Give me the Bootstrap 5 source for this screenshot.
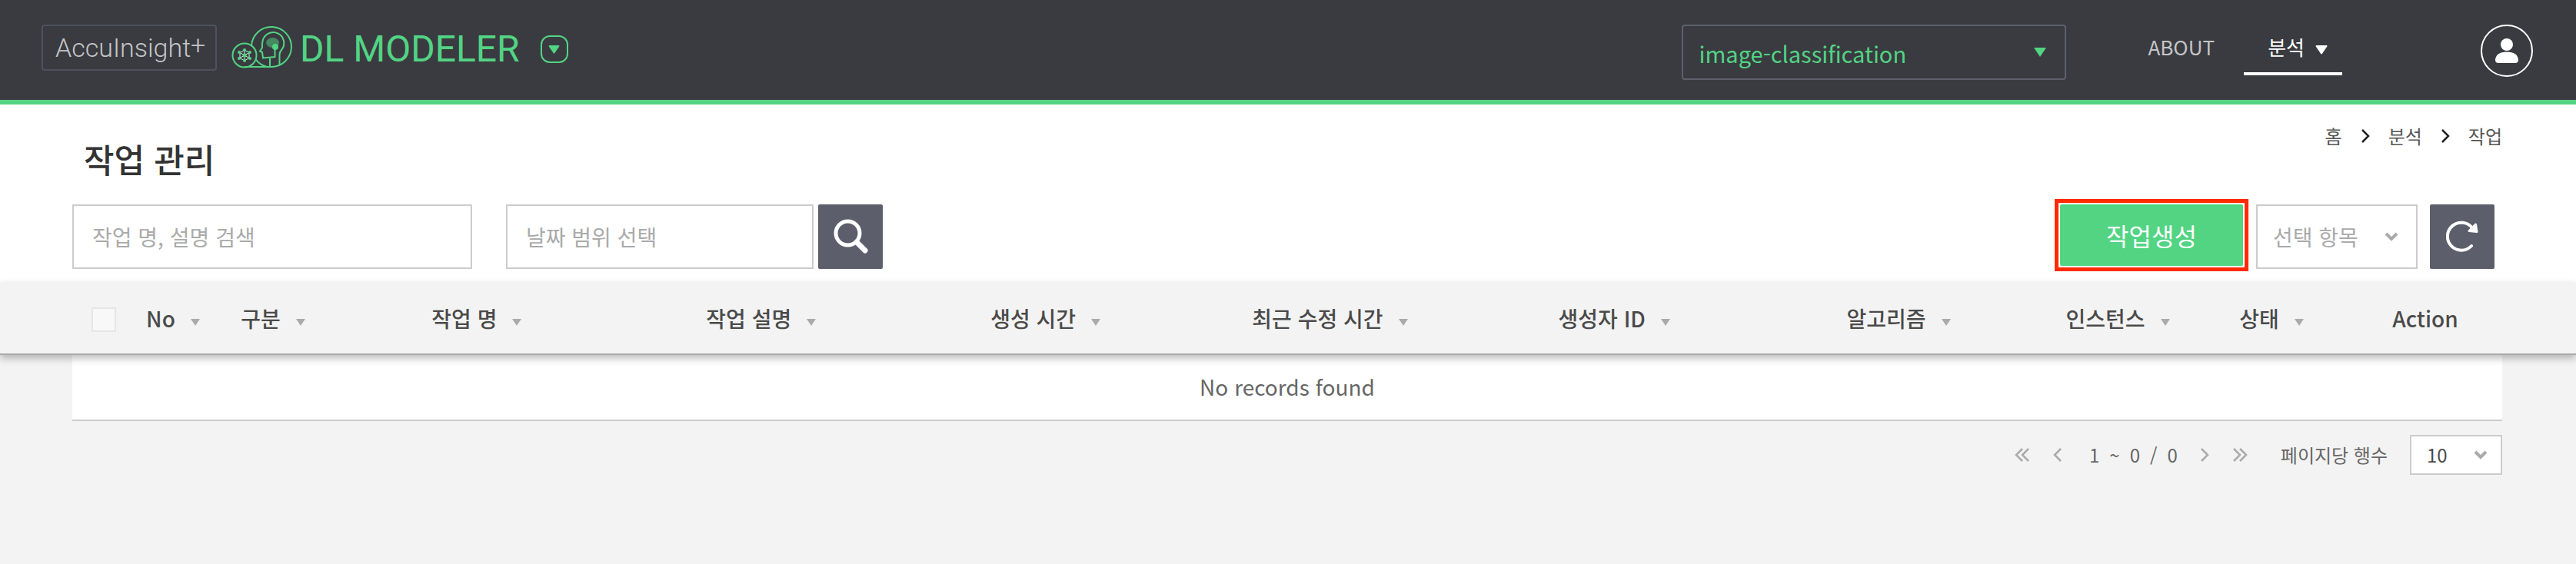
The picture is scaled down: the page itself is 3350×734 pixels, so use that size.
<!DOCTYPE html>
<html lang="ko">
<head>
<meta charset="utf-8">
<meta name="viewport" content="width=device-width, initial-scale=1">
<title>DL MODELER - 작업 관리</title>
<link href="https://cdn.jsdelivr.net/npm/bootstrap@5.3.0/dist/css/bootstrap.min.css" rel="stylesheet">
<style>
:root{--green:#52d483;--dark:#3a3b41;--slate:#5c5f6b;--line:#ccc;--page:#f3f3f3}
body{font-family:"Noto Sans CJK KR",sans-serif;background:var(--page);font-size:28px;color:#4a4a4a}
svg{display:block;flex:none}
.flip{rotate:180deg}

/* top bar */
.topbar{background:var(--dark);border-bottom:6px solid var(--green);height:136px;padding:0 56px 0 54px;align-items:flex-start}
.brand-box{width:228px;height:60px;margin-top:32px;padding-left:16px;border:2px solid #4e525c;border-radius:4px;color:#c4c5c7;font:300 34px/56px Roboto,sans-serif;white-space:nowrap}
.brand-box sup{font-size:34px;line-height:0;top:-4px}
.product-logo{margin:32px 8px 0 16px}
.product{font:400 48px/60px Roboto,sans-serif;color:var(--green);margin-top:34px}
.app-switch{width:36px;height:36px;margin:46px 0 0 27px;border:2px solid var(--green);border-radius:12px;background:none;color:var(--green)}
.project-select{width:500px;height:72px;margin-top:32px;padding:4px 20px 0;border:2px solid #5c5f6b;border-radius:4px;font-size:29px;color:var(--green);background-color:transparent;
 background-image:url("data:image/svg+xml,%3Csvg xmlns='http://www.w3.org/2000/svg' viewBox='0 0 16 12'%3E%3Cpath d='M0 0h16l-8 12z' fill='%2352d483'/%3E%3C/svg%3E");background-size:16px 12px;background-position:right 24px center}
.top-link{font-size:26px;line-height:38px;color:#c4c5c7;text-decoration:none;margin:42px 38px 0 106px}
.top-link.current{width:128px;height:56px;margin:42px 180px 0 0;padding-right:19px;color:#fff;border-bottom:4px solid #fff}
.top-link svg{margin:17px 0 0 14px}
.avatar{width:68px;height:68px;margin-top:32px;border:2px solid #fff;border-radius:50%;background:none}

/* title and tools */
.head-panel{background:#fff;padding:30px 96px 18px 94px}
.crumbs{padding:24px 96px 0 0;font-size:24px;line-height:34px;color:#555;gap:24px}
.crumbs a{color:inherit;text-decoration:none}
.crumbs svg{color:#222}
.page-title{font-size:43px;line-height:60px;font-weight:500;color:#333;margin:10px 0 0 15px}
.tools{margin-top:30px}
.field{height:84px;border:2px solid var(--line);border-radius:0;font-size:28px;padding:0 24px;color:#aaa}
.field::placeholder{color:#aaa}
.field-name{width:520px;margin-right:44px}
.field-date{width:400px;margin-right:6px}
.square{width:84px;height:84px;border-radius:2px;background:var(--slate);border:0;padding:0}
.refresh{margin:0 10px 0 16px}
.callout{border:5px solid #ff2a00;padding:2px;margin:-7px 10px -3px 0}
.create{width:238px;height:80px;border:0;border-radius:2px;background:var(--green);color:#fff;font-size:32px;padding:0}
.chevron{background-image:url("data:image/svg+xml,%3Csvg xmlns='http://www.w3.org/2000/svg' viewBox='0 0 18 12'%3E%3Cpath d='M2 2l7 7 7-7' fill='none' stroke='%23aaa' stroke-width='4'/%3E%3C/svg%3E");background-size:18px 12px}
.pick{width:210px;padding:0 20px;background-position:right 23px center}

/* job table */
.jobs{table-layout:fixed;width:100%;border-collapse:separate;border-spacing:0}
.jobs .c-edge-l{width:94px}
.jobs .c-check{width:81px}
.jobs .c-no{width:100px}
.jobs .c-kind{width:160px}
.jobs .c-short{width:200px}
.jobs .c-edge-r{width:96px}
.jobs thead{position:relative;box-shadow:0 4px 10px 0 rgba(0,0,0,.28)}
.jobs th{height:94px;padding:0;border-bottom:2px solid #aaa;background:var(--page);font-weight:500;text-align:center;vertical-align:middle}
.jobs th button{border:0;background:none;padding:0;font-weight:500;color:#4a4a4a;line-height:42px;white-space:nowrap}
.sort::after{content:"";display:inline-block;margin-left:20px;border:6px solid transparent;border-top:9px solid #aaa;border-bottom:0;vertical-align:2px}
.jobs .empty{height:86px;padding:0 0 2px;background:#fff;border-bottom:2px solid var(--line);text-align:center;color:#666;vertical-align:middle}
.jobs .form-check-input{display:block;width:32px;height:32px;margin:3px auto 0;border:2px solid #e6e6e6;border-radius:0;background-color:#f8f8f8}

/* pager */
.pager{padding:18px 96px 18px 0;font-size:24px;line-height:36px;color:#666}
.pager button{border:0;background:none;padding:0;color:#aaa}
.range{gap:13px;margin:0 29px 0 35px}
.gap-wide{gap:30px}
.pager label{margin:0 29px 0 43px}
.rows{width:120px;height:52px;border:2px solid var(--line);border-radius:0;padding:0 20px;font-size:24px;color:#4a4a4a;background-color:#fff;background-position:right 17px center}
</style>
</head>
<body>
<svg width="0" height="0" class="position-absolute" aria-hidden="true">
 <symbol id="down" viewBox="0 0 16 12"><path d="M1.500 1h13L8 10.500z" fill="currentColor" stroke="currentColor" stroke-width="2" stroke-linejoin="round"/></symbol>
 <symbol id="next" viewBox="0 0 12 18"><path d="M2 1l8 8-8 8" fill="none" stroke="currentColor" stroke-width="2.500"/></symbol>
 <symbol id="last" viewBox="0 0 20 18"><path d="M2 1l8 8-8 8M10 1l8 8-8 8" fill="none" stroke="currentColor" stroke-width="2.500"/></symbol>
</svg>
<header class="topbar d-flex">
 <a href="#" class="brand-box d-block text-decoration-none">AccuInsight<sup>+</sup></a>
 <svg class="product-logo" width="84" height="58" viewBox="8 12 84 58" fill="none" stroke="#52d483" stroke-width="2" aria-hidden="true">
  <circle cx="28" cy="52" r="15.5"/>
  <path d="M37 39.500A26 26 0 1 1 62.500 67H28M42.500 57Q47 64 57 67"/>
  <path d="M73.500 65V51Q73.500 48 76 45A14 14 0 1 0 51.500 33.500Q50.500 39 51 42L48 46.500 51 48 52 55.500 67.500 54V41M61 56V66"/>
  <ellipse cx="64.500" cy="35.500" rx="8.500" ry="6.500" fill="#458a61" stroke="none"/>
  <circle cx="68" cy="41" r="4" fill="#52d483" stroke="none"/>
  <path d="M28 45l6 3.500v7L28 59l-6-3.500v-7zM22 48.500l12 7M34 48.500l-12 7M28 45v14" stroke="#c9f5d9" stroke-width="1"/>
  <g fill="#52d483" stroke="none"><circle cx="28" cy="52" r="2.500"/><circle cx="28" cy="45" r="2"/><circle cx="28" cy="59" r="2"/><circle cx="21" cy="48" r="2"/><circle cx="35" cy="48" r="2"/><circle cx="21" cy="56" r="2"/><circle cx="35" cy="56" r="2"/></g>
 </svg>
 <span class="product">DL MODELER</span>
 <button type="button" class="app-switch d-flex align-items-center justify-content-center p-0" aria-label="제품 선택"><svg width="15" height="11"><use href="#down"/></svg></button>
 <select class="project-select form-select ms-auto" aria-label="프로젝트"><option>image-classification</option></select>
 <a href="#" class="top-link">ABOUT</a>
 <a href="#" class="top-link current d-flex justify-content-end">분석<svg width="16" height="12"><use href="#down"/></svg></a>
 <button type="button" class="avatar d-flex align-items-center justify-content-center p-0" aria-label="사용자"><svg width="30" height="32" viewBox="0 0 30 32" fill="#fff"><circle cx="15" cy="8" r="8"/><path d="M0 28Q1 17.500 15 17.500T30 28Q30 32 26 32H4Q0 32 0 28z"/></svg></button>
</header>
<main>
 <section class="head-panel position-relative">
  <nav class="crumbs position-absolute top-0 end-0 d-flex align-items-center" aria-label="breadcrumb">
   <a href="#">홈</a><svg width="12" height="18"><use href="#next"/></svg><a href="#">분석</a><svg width="12" height="18"><use href="#next"/></svg><span>작업</span>
  </nav>
  <h1 class="page-title">작업 관리</h1>
  <form class="tools d-flex">
   <input class="field field-name form-control" type="text" placeholder="작업 명, 설명 검색" aria-label="작업 명, 설명 검색">
   <input class="field field-date form-control" type="text" placeholder="날짜 범위 선택" aria-label="날짜 범위 선택">
   <button type="button" class="square d-flex align-items-center justify-content-center" aria-label="검색"><svg width="46" height="46" viewBox="0 0 46 46" fill="none" stroke="#fff"><circle cx="19.500" cy="18.500" r="15.500" stroke-width="5"/><path d="M31 30l11 11" stroke-width="7" stroke-linecap="round"/></svg></button>
   <div class="callout ms-auto"><button type="button" class="create d-block">작업생성</button></div>
   <select class="field pick chevron form-select" aria-label="선택 항목"><option>선택 항목</option></select>
   <button type="button" class="square refresh d-flex align-items-center justify-content-center" aria-label="새로고침"><svg width="42" height="42" viewBox="0 0 42 42" fill="none"><path d="M33 33A18 18 0 1 1 34 9.500" stroke="#fff" stroke-width="4" stroke-linecap="round"/><path d="M30 13.500l8.500-8.500 1.500 9.500z" fill="#fff" stroke="#fff" stroke-width="3" stroke-linejoin="round"/></svg></button>
  </form>
 </section>
 <table class="jobs">
  <colgroup><col class="c-edge-l"><col class="c-check"><col class="c-no"><col class="c-kind"><col span="6"><col class="c-short" span="3"><col class="c-edge-r"></colgroup>
  <thead><tr>
   <th></th>
   <th><input class="form-check-input" type="checkbox" aria-label="전체 선택"></th>
   <th><button type="button" class="sort">No</button></th>
   <th><button type="button" class="sort">구분</button></th>
   <th><button type="button" class="sort">작업 명</button></th>
   <th><button type="button" class="sort">작업 설명</button></th>
   <th><button type="button" class="sort">생성 시간</button></th>
   <th><button type="button" class="sort">최근 수정 시간</button></th>
   <th><button type="button" class="sort">생성자 ID</button></th>
   <th><button type="button" class="sort">알고리즘</button></th>
   <th><button type="button" class="sort">인스턴스</button></th>
   <th><button type="button" class="sort">상태</button></th>
   <th>Action</th>
   <th></th>
  </tr></thead>
  <tbody><tr><td></td><td class="empty" colspan="12">No records found</td><td></td></tr></tbody>
 </table>
 <nav class="pager d-flex align-items-center justify-content-end" aria-label="페이지">
  <div class="d-flex gap-wide">
   <button type="button" aria-label="처음"><svg class="flip" width="20" height="18"><use href="#last"/></svg></button>
   <button type="button" aria-label="이전"><svg class="flip" width="12" height="18"><use href="#next"/></svg></button>
  </div>
  <span class="range d-flex"><span>1</span><span>~</span><span>0</span><span>/</span><span>0</span></span>
  <div class="d-flex gap-wide">
   <button type="button" aria-label="다음"><svg width="12" height="18"><use href="#next"/></svg></button>
   <button type="button" aria-label="마지막"><svg width="20" height="18"><use href="#last"/></svg></button>
  </div>
  <label for="rows">페이지당 행수</label>
  <select id="rows" class="rows chevron form-select"><option>10</option></select>
 </nav>
</main>
<script src="https://cdn.jsdelivr.net/npm/bootstrap@5.3.0/dist/js/bootstrap.bundle.min.js"></script>
</body>
</html>
